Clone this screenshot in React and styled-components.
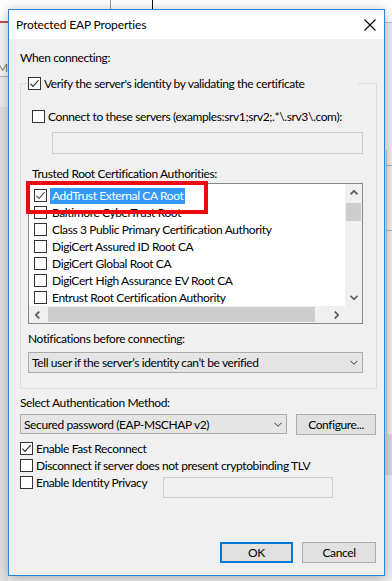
import React from "react";
import styled, { createGlobalStyle } from "styled-components";

const GlobalStyle = createGlobalStyle`
  html, body {
    margin: 0;
    padding: 0;
  }
  body {
    background: #efefef;
    font-family: Lato, "Liberation Sans", sans-serif;
    font-size: 12px;
    letter-spacing: -0.38px;
    color: #000;
  }
`;

const Desktop = styled.div`
  position: relative;
  width: 392px;
  height: 581px;
  overflow: hidden;
  background: #efefef;
`;

// windows behind the dialog
const BackBand = styled.div`
  position: absolute;
  left: 0;
  right: 0;
  top: 0;
  height: 22px;
  background: #fff;
  border-bottom: 1px solid #c4c4c4;
`;

const BackRule = styled.div`
  position: absolute;
  left: ${(p) => p.$x}px;
  top: ${(p) => p.$y}px;
  width: ${(p) => p.$w}px;
  height: ${(p) => p.$h}px;
  background: ${(p) => p.$c};
`;

const BackPane = styled.div`
  position: absolute;
  left: 0;
  top: 23px;
  width: 8px;
  height: 54px;
  background: #f8f8f8;
  border-bottom: 1px solid #b4b4b4;
  overflow: hidden;
  color: #777;
  font-size: 12px;
  line-height: 15px;
  text-indent: -3px;
  padding-top: 37px;
  box-sizing: border-box;
`;

const BackLower = styled.div`
  position: absolute;
  left: 0;
  top: 107px;
  bottom: 0;
  width: 8px;
  background: #e4e4e4;
`;

const Dialog = styled.div`
  position: absolute;
  left: 8px;
  top: 9px;
  width: 377px;
  height: 567px;
  box-sizing: border-box;
  border: 1px solid #2a86d6;
  background: #f0f0f0;
  box-shadow: 0 2px 12px rgba(0, 0, 0, 0.3);
  display: flex;
  flex-direction: column;
`;

const TitleBar = styled.div`
  flex: none;
  height: 29px;
  background: #fff;
  display: flex;
  align-items: center;
  justify-content: space-between;
  padding: 0 8px 0 7px;
`;

const Title = styled.span`
  font-size: 12px;
  line-height: 15px;
  letter-spacing: -0.15px;
`;

const Body = styled.div`
  flex: 1;
  display: flex;
  flex-direction: column;
  align-items: stretch;
  padding: 11px 7px 12px 11px;
`;

const Caption = styled.div`
  height: 15px;
  line-height: 15px;
  white-space: nowrap;
  margin-left: ${(p) => p.$indent || 0}px;
  margin-top: ${(p) => p.$top || 0}px;
`;

const Group = styled.fieldset`
  margin: 11px 0 0;
  padding: 0 13px 15px 7px;
  border: 1px solid #dcdcdc;
  min-width: 0;
  display: flex;
  flex-direction: column;
  align-items: flex-start;
`;

const Legend = styled.legend`
  padding: 0;
  width: 330px;
  height: 15px;
  line-height: 15px;
  display: flex;
  align-items: center;
  gap: 3px;
  white-space: nowrap;
`;

const CheckRow = styled.div`
  flex: none;
  display: flex;
  align-items: center;
  gap: 3px;
  height: 17px;
  line-height: 15px;
  white-space: nowrap;
  width: ${(p) => (p.$width ? `${p.$width}px` : "auto")};
  margin-left: ${(p) => p.$indent || 0}px;
  margin-top: ${(p) => p.$top || 0}px;
`;

const Box = styled.span`
  flex: none;
  width: 13px;
  height: 13px;
  box-sizing: border-box;
  border: 1px solid #333;
  background: #fff;
  display: inline-flex;
  align-items: center;
  justify-content: center;
`;

const Field = styled.div`
  flex: none;
  box-sizing: border-box;
  width: ${(p) => p.$w}px;
  height: ${(p) => p.$h}px;
  border: 1px solid #cccccc;
  background: #f0f0f0;
  margin-left: ${(p) => p.$indent || 0}px;
  margin-top: ${(p) => p.$top || 0}px;
`;

const CertList = styled.div`
  position: relative;
  flex: none;
  box-sizing: border-box;
  width: 335px;
  height: 141px;
  margin-top: 2px;
  border: 1px solid #828790;
  background: #fff;
  display: grid;
  grid-template-columns: 1fr 17px;
  grid-template-rows: 1fr 17px;
`;

const Rows = styled.div`
  padding-top: 3px;
  overflow: hidden;
`;

const Row = styled.div`
  height: 17px;
  display: flex;
  align-items: center;
  gap: 3px;
  padding-left: 5px;
  white-space: nowrap;
`;

const RowText = styled.span`
  padding: 0 2px;
  line-height: 16px;
  background: ${(p) => (p.$selected ? "#3399ff" : "transparent")};
  color: ${(p) => (p.$selected ? "#fff" : "#000")};
`;

const VScroll = styled.div`
  background: #f0f0f0;
  display: flex;
  flex-direction: column;
`;

const HScroll = styled.div`
  background: #f0f0f0;
  display: flex;
  align-items: stretch;
`;

const ScrollButton = styled.div`
  flex: none;
  width: 17px;
  height: 17px;
  display: flex;
  align-items: center;
  justify-content: center;
`;

const Thumb = styled.div`
  flex: none;
  background: #cdcdcd;
  ${(p) =>
    p.$horizontal
      ? `width: 267px; margin: 1px 0 1px 2px;`
      : `height: 18px; margin: 2px 1px 0 1px;`}
`;

const Spacer = styled.div`
  flex: 1;
`;

const Corner = styled.div`
  background: #f0f0f0;
`;

const Annotation = styled.div`
  position: absolute;
  left: -3px;
  top: -3px;
  width: 182px;
  height: 33px;
  box-sizing: border-box;
  border: 4px solid #ec0a10;
  pointer-events: none;
`;

const Combo = styled.div`
  flex: none;
  box-sizing: border-box;
  width: ${(p) => p.$w}px;
  height: ${(p) => p.$h}px;
  margin-top: ${(p) => p.$top || 0}px;
  display: flex;
  align-items: center;
  justify-content: space-between;
  padding: 0 4px 0 3px;
  background: #e5e5e5;
  border: 1px solid #acacac;
  white-space: nowrap;
`;

const AuthRow = styled.div`
  display: flex;
  gap: 9px;
  margin-top: 4px;
`;

const Options = styled.div`
  display: flex;
  flex-direction: column;
  margin-top: 5px;
`;

const OptionLine = styled.div`
  display: flex;
  align-items: flex-start;
`;

const Footer = styled.div`
  margin-top: auto;
  margin-right: 1px;
  display: flex;
  justify-content: flex-end;
  gap: 9px;
`;

const Button = styled.button`
  box-sizing: border-box;
  width: ${(p) => p.$w}px;
  height: 21px;
  padding: 0;
  font: inherit;
  letter-spacing: inherit;
  color: #000;
  background: #e1e1e1;
  border: ${(p) => (p.$primary ? "2px solid #0078d7" : "1px solid #adadad")};
`;

const Check = ({ checked, muted }) => (
  <Box>
    {checked && (
      <svg width="11" height="11" viewBox="0 0 11 11">
        <polyline
          points="1.4,5.6 4,8.3 9.6,2.2"
          fill="none"
          stroke={muted ? "#5a5a5a" : "#333"}
          strokeWidth="1.2"
        />
      </svg>
    )}
  </Box>
);

const Chevron = ({ dir = "down", color = "#333", weight = 1 }) => {
  const pts = {
    down: "0.5,0.8 4,4.3 7.5,0.8",
    up: "0.5,4.3 4,0.8 7.5,4.3",
    left: "4.3,0.5 0.8,4 4.3,7.5",
    right: "0.8,0.5 4.3,4 0.8,7.5",
  }[dir];
  const vertical = dir === "up" || dir === "down";
  return (
    <svg
      width={vertical ? 8 : 5}
      height={vertical ? 5 : 8}
      viewBox={vertical ? "0 0 8 5" : "0 0 5 8"}
    >
      <polyline points={pts} fill="none" stroke={color} strokeWidth={weight} />
    </svg>
  );
};

const CloseIcon = () => (
  <svg width="12" height="12" viewBox="0 0 12 12">
    <path d="M0.5 0.5 L11.5 11.5 M11.5 0.5 L0.5 11.5" stroke="#000" strokeWidth="1.1" />
  </svg>
);

const certs = [
  "AddTrust External CA Root",
  "Baltimore CyberTrust Root",
  "Class 3 Public Primary Certification Authority",
  "DigiCert Assured ID Root CA",
  "DigiCert Global Root CA",
  "DigiCert High Assurance EV Root CA",
  "Entrust Root Certification Authority",
];

export default function App() {
  return (
    <>
      <GlobalStyle />
      <Desktop>
        <BackBand />
        <BackRule $x={0} $y={21} $w={8} $h={2} $c="#d24a4a" />
        <BackRule $x={110} $y={0} $w={1} $h={9} $c="#9a9a9a" />
        <BackRule $x={152} $y={0} $w={1} $h={9} $c="#111" />
        <BackPane>M</BackPane>
        <BackLower />
        <BackRule $x={386} $y={150} $w={1} $h={284} $c="#a9c9e8" />
        <BackRule $x={386} $y={165} $w={6} $h={1} $c="#8dbbe6" />
        <BackRule $x={386} $y={230} $w={6} $h={1} $c="#8dbbe6" />
        <BackRule $x={385} $y={434} $w={7} $h={41} $c="#dadada" />

        <Dialog>
          <TitleBar>
            <Title>Protected EAP Properties</Title>
            <CloseIcon />
          </TitleBar>
          <Body>
            <Caption>When connecting:</Caption>
            <Group>
              <Legend>
                <Check checked />
                Verify the server's identity by validating the certificate
              </Legend>
              <CheckRow $indent={4} $top={17}>
                <Check />
                Connect to these servers (examples:srv1;srv2;.*\.srv3\.com):
              </CheckRow>
              <Field $w={311} $h={22} $indent={24} $top={7} />
              <Caption $indent={4} $top={12}>
                Trusted Root Certification Authorities:
              </Caption>
              <CertList>
                <Rows>
                  {certs.map((name, i) => (
                    <Row key={name}>
                      <Check checked={i === 0} muted />
                      <RowText $selected={i === 0}>{name}</RowText>
                    </Row>
                  ))}
                </Rows>
                <VScroll>
                  <ScrollButton>
                    <Chevron dir="up" color="#606060" weight={1.8} />
                  </ScrollButton>
                  <Thumb />
                  <Spacer />
                  <ScrollButton>
                    <Chevron dir="down" color="#606060" weight={1.8} />
                  </ScrollButton>
                </VScroll>
                <HScroll>
                  <ScrollButton>
                    <Chevron dir="left" color="#606060" weight={1.8} />
                  </ScrollButton>
                  <Thumb $horizontal />
                  <Spacer />
                  <ScrollButton>
                    <Chevron dir="right" color="#606060" weight={1.8} />
                  </ScrollButton>
                </HScroll>
                <Corner />
                <Annotation />
              </CertList>
              <Caption $top={7}>Notifications before connecting:</Caption>
              <Combo $w={335} $h={21} $top={6}>
                Tell user if the server’s identity can’t be verified
                <Chevron />
              </Combo>
            </Group>
            <Caption $top={6}>Select Authentication Method:</Caption>
            <AuthRow>
              <Combo $w={267} $h={20}>
                Secured password (EAP-MSCHAP v2)
                <Chevron />
              </Combo>
              <Button $w={80}>Configure...</Button>
            </AuthRow>
            <Options>
              <CheckRow>
                <Check checked />
                Enable Fast Reconnect
              </CheckRow>
              <CheckRow>
                <Check />
                Disconnect if server does not present cryptobinding TLV
              </CheckRow>
              <OptionLine>
                <CheckRow $width={143}>
                  <Check />
                  Enable Identity Privacy
                </CheckRow>
                <Field $w={170} $h={21} $top={3} />
              </OptionLine>
            </Options>
            <Footer>
              <Button $w={73} $primary>
                OK
              </Button>
              <Button $w={74}>Cancel</Button>
            </Footer>
          </Body>
        </Dialog>
      </Desktop>
    </>
  );
}
